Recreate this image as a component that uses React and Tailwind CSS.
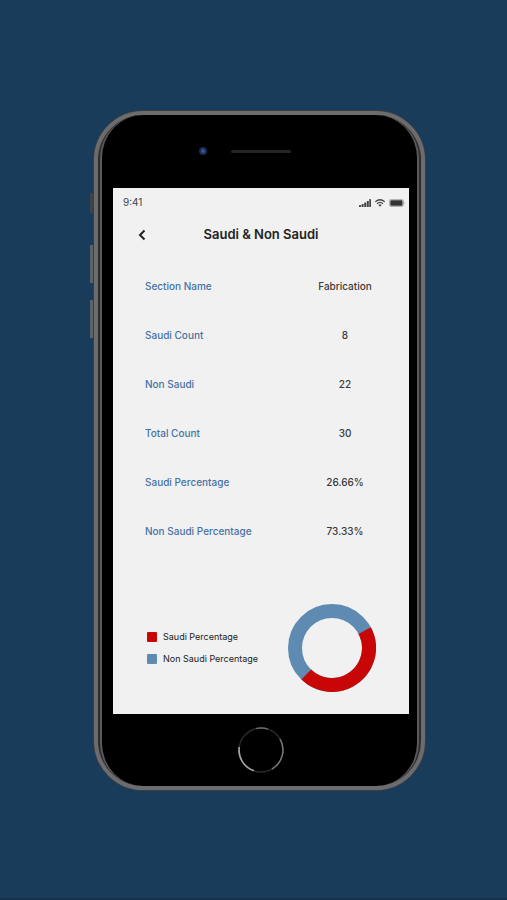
import React from "react";

const rows = [
    { label: "Section Name", value: "Fabrication" },
    { label: "Saudi Count", value: "8" },
    { label: "Non Saudi", value: "22" },
    { label: "Total Count", value: "30" },
    { label: "Saudi Percentage", value: "26.66%" },
    { label: "Non Saudi Percentage", value: "73.33%" },
];

const legend = [
    { label: "Saudi Percentage", color: "bg-[#c90606]" },
    { label: "Non Saudi Percentage", color: "bg-[#5f8ab2]" },
];

function StatusBar() {
    return (
        <div className="flex h-[30px] items-center justify-between pl-[10px] pr-1 text-[#444]">
            <span className="text-[10px]">9:41</span>
            <div className="flex items-center gap-1">
                {/* Signal */}
                <svg className="h-2 w-3" viewBox="0 0 12 8" fill="currentColor" aria-hidden="true">
                    <rect x="0" y="6" width="2" height="2" rx="0.5" />
                    <rect x="2.6" y="5" width="2" height="3" rx="0.5" />
                    <rect x="5.2" y="3.5" width="2" height="4.5" rx="0.5" />
                    <rect x="7.8" y="2" width="2" height="6" rx="0.5" />
                    <rect x="10.3" y="0" width="1.7" height="8" rx="0.5" />
                </svg>
                {/* Wifi */}
                <svg className="h-2 w-[10px]" viewBox="0 0 10 8" fill="none" stroke="currentColor" strokeWidth="1.3" aria-hidden="true">
                    <path d="M0.3 2.8 Q5 -1.4 9.7 2.8" />
                    <path d="M2 4.7 Q5 2 8 4.7" />
                    <path d="M3.4 6 Q5 4.7 6.6 6 L5 7.8 Z" fill="currentColor" stroke="none" />
                </svg>
                {/* Battery */}
                <svg className="h-2 w-4" viewBox="0 0 16 8" aria-hidden="true">
                    <rect x="0.4" y="0.4" width="14" height="7.2" rx="1.8" fill="none" stroke="#999" strokeWidth="0.8" />
                    <rect x="1.3" y="1.3" width="12.2" height="5.4" rx="0.8" fill="#333" />
                    <path d="M15 2.8 Q16 4 15 5.2 Z" fill="#777" />
                </svg>
            </div>
        </div>
    );
}

function Header() {
    return (
        <header className="grid h-[34px] grid-cols-[40px_1fr_40px] items-center px-2">
            <button type="button" aria-label="Back" className="flex h-6 w-10 items-center justify-center pl-[2px] text-[#222]">
                <svg className="h-3 w-2" viewBox="0 0 8 12" fill="none" stroke="currentColor" strokeWidth="2" aria-hidden="true">
                    <path d="M6.5 1.5 L2 6 L6.5 10.5" />
                </svg>
            </button>
            <h1 className="whitespace-nowrap text-center text-[13px] font-semibold text-[#222]">Saudi &amp; Non Saudi</h1>
        </header>
    );
}

function DetailsTable() {
    return (
        <table className="mt-[10px] w-full text-[10px]">
            <tbody>
                {rows.map((row) => (
                    <tr key={row.label} className="h-[49px]">
                        <th scope="row" className="text-left font-medium text-[#4672a5]">
                            {row.label}
                        </th>
                        <td className="w-24 text-center font-medium text-[#3a3a3a]">{row.value}</td>
                    </tr>
                ))}
            </tbody>
        </table>
    );
}

function DonutChart() {
    return (
        <svg className="h-[88px] w-[88px] shrink-0" viewBox="0 0 88 88" fill="none" strokeWidth="14" role="img" aria-label="Saudi and non Saudi percentage">
            <circle cx="44" cy="44" r="37" stroke="#5f8ab2" />
            <circle
                cx="44"
                cy="44"
                r="37"
                stroke="#c90606"
                pathLength="100"
                strokeDasharray="45 55"
                transform="rotate(-28 44 44)"
            />
        </svg>
    );
}

function HomeButton() {
    return (
        <button type="button" aria-label="Home" className="rounded-full">
            <svg className="h-[46px] w-[46px]" viewBox="0 0 46 46" fill="none" aria-hidden="true">
                <circle cx="23" cy="23" r="22" stroke="#2a2a2a" strokeWidth="1.4" />
                <path d="M1.2 20 A22 22 0 0 0 16 43.8" stroke="#a5a5a5" strokeWidth="1.6" />
                <path d="M18 1.6 A22 22 0 0 1 30 2.2" stroke="#6a6a6a" strokeWidth="1.4" />
                <path d="M42 12 A22 22 0 0 1 34 42" stroke="#777" strokeWidth="1.5" />
            </svg>
        </button>
    );
}

function Phone({ children }) {
    return (
        <div className="relative w-full max-w-[333px]">
            {/* Side buttons */}
            <span className="absolute -left-[3px] top-[83px] h-5 w-1 bg-[#3d4349]" />
            <span className="absolute -left-[3px] top-[135px] h-[38px] w-1 bg-[#5c6268]" />
            <span className="absolute -left-[3px] top-[190px] h-[38px] w-1 bg-[#5c6268]" />

            <div className="relative rounded-[50px] border border-[#3c3d40] bg-[#3c3d40]">
                <div className="rounded-[49px] border-4 border-[#6c6c6e] bg-[#6c6c6e]">
                    <div className="rounded-[45px] border-x-2 border-[#2c2c2e] bg-[#2c2c2e]">
                        <div className="rounded-[43px] border-x-2 border-[#59595b] bg-black pl-[11px] pr-2">
                            <div className="flex h-[73px] items-center justify-center gap-6 pr-8">
                                <span className="h-2 w-2 rounded-full border-2 border-[#1c2c50] bg-[#35559c]" />
                                <span className="h-[3px] w-[60px] rounded-full bg-[#252525]" />
                            </div>
                            {children}
                            <div className="flex h-[72px] items-center justify-center">
                                <HomeButton />
                            </div>
                        </div>
                    </div>
                </div>
            </div>
        </div>
    );
}

export default function App() {
    return (
        <div className="flex min-h-screen items-center justify-center border-b-2 border-[#17304a] bg-[#1a3c5b] pl-3 pt-[2px] font-['Inter','Liberation_Sans',sans-serif]">
            <Phone>
                <main className="bg-[#f1f1f1] pb-[22px]">
                    <StatusBar />
                    <Header />
                    <div className="pl-8 pr-4">
                        <DetailsTable />
                        <div className="mt-12 flex items-center justify-between pl-[2px] pr-[17px]">
                            <ul className="flex flex-col gap-2">
                                {legend.map((item) => (
                                    <li key={item.label} className="flex items-center gap-[6px] whitespace-nowrap text-[9px] leading-[14px] text-[#222]">
                                        <span className={`h-[10px] w-[10px] rounded-[1px] ${item.color}`} />
                                        {item.label}
                                    </li>
                                ))}
                            </ul>
                            <DonutChart />
                        </div>
                    </div>
                </main>
            </Phone>
        </div>
    );
}
